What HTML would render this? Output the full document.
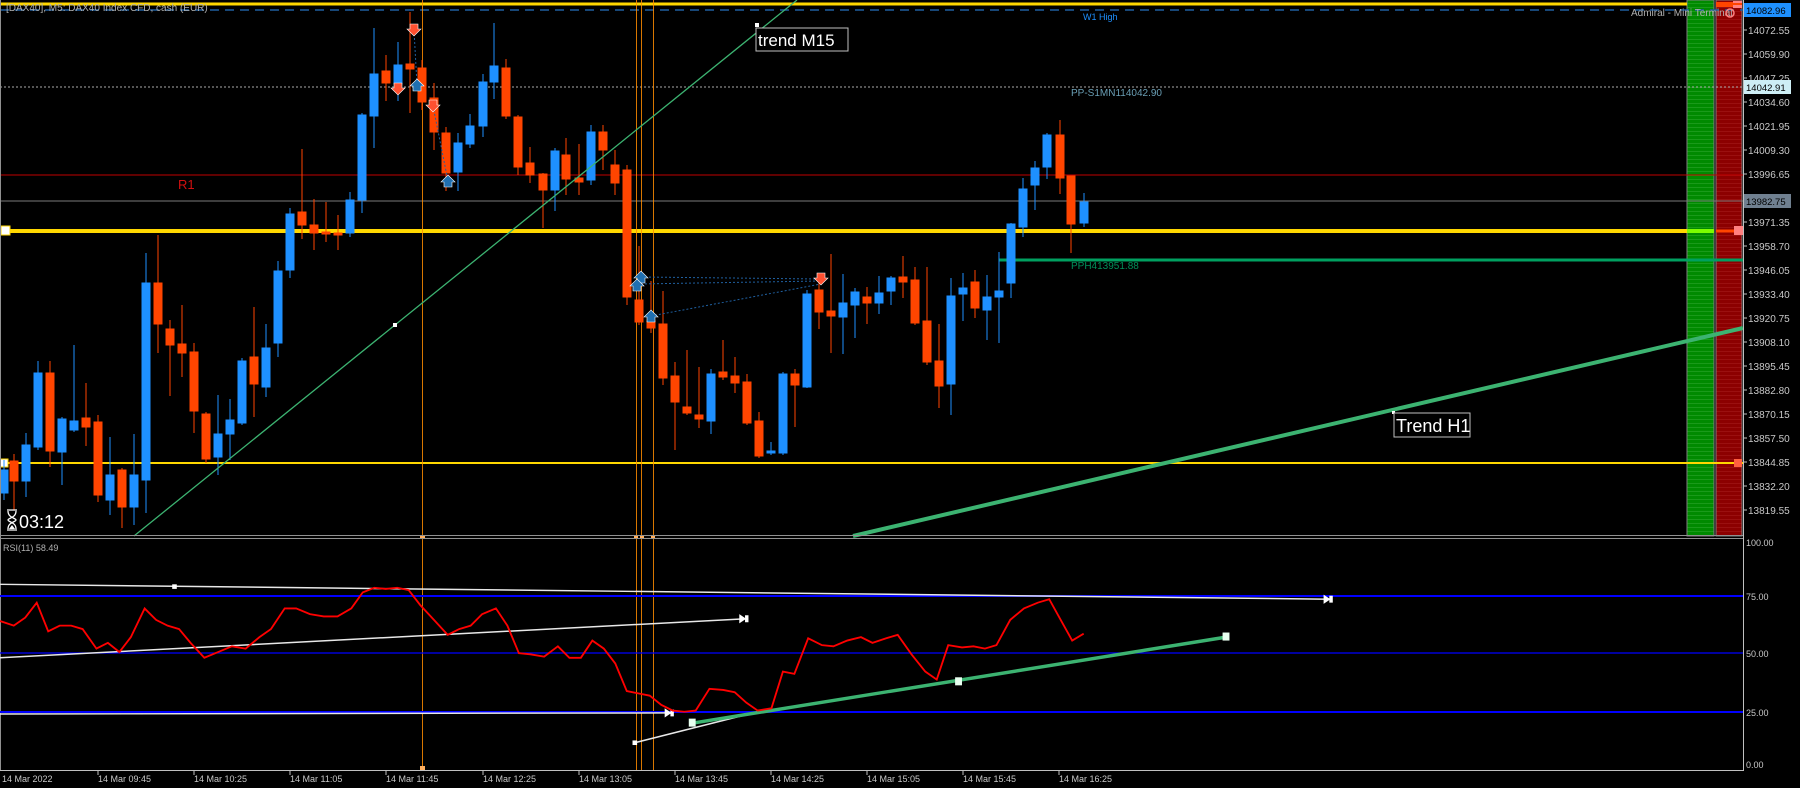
<!DOCTYPE html>
<html><head><meta charset="utf-8"><style>
html,body{margin:0;padding:0;background:#000;width:1800px;height:788px;overflow:hidden}
svg{display:block}
text{font-family:"Liberation Sans",sans-serif}
</style></head><body>
<svg width="1800" height="788" viewBox="0 0 1800 788" xmlns="http://www.w3.org/2000/svg">
<rect width="1800" height="788" fill="#000"/>
<defs>
<pattern id="stripeG" width="4" height="4" patternUnits="userSpaceOnUse"><rect width="4" height="4" fill="#008a00"/><rect y="3" width="4" height="1" fill="#1a9a1a"/></pattern>
<pattern id="stripeR" width="4" height="4" patternUnits="userSpaceOnUse"><rect width="4" height="4" fill="#8c0000"/><rect y="3" width="4" height="1" fill="#9a1010"/></pattern>
</defs>
<rect x="1687" y="0" width="27" height="536" fill="url(#stripeG)" stroke="#808080" stroke-width="1"/>
<rect x="1716" y="0" width="26" height="536" fill="url(#stripeR)" stroke="#808080" stroke-width="1"/>
<rect x="1716" y="2" width="26" height="5" fill="#ff4500"/>
<rect x="1733" y="1" width="9" height="7" fill="#ff8080"/>
<line x1="0" y1="4" x2="1687" y2="4" stroke="#ffd700" stroke-width="3"/>
<line x1="1716" y1="4" x2="1742" y2="4" stroke="#ff4500" stroke-width="2"/>
<line x1="0" y1="10" x2="1743" y2="10" stroke="#1f5f9f" stroke-width="1.5" stroke-dasharray="9,6"/>
<line x1="0" y1="87" x2="1743" y2="87" stroke="#aaa" stroke-width="1" stroke-dasharray="2,2"/>
<line x1="0" y1="175" x2="1743" y2="175" stroke="#c00000" stroke-width="1"/>
<line x1="0" y1="201" x2="1743" y2="201" stroke="#7a7a7a" stroke-width="1"/>
<line x1="0" y1="231" x2="1687" y2="231" stroke="#ffd700" stroke-width="4"/>
<line x1="1687" y1="231" x2="1714" y2="231" stroke="#7cfc00" stroke-width="4"/>
<line x1="1716" y1="231" x2="1742" y2="231" stroke="#ff4500" stroke-width="3"/>
<rect x="1734" y="226" width="9" height="9" fill="#ff8080"/>
<line x1="999" y1="260" x2="1743" y2="260" stroke="#00a060" stroke-width="3"/>
<line x1="0" y1="463" x2="1743" y2="463" stroke="#ffd700" stroke-width="2"/>
<rect x="1734" y="459" width="8" height="8" fill="#ff6040"/>
<rect x="1" y="226" width="9" height="9" fill="#fff" stroke="#ffd700"/>
<rect x="0" y="459" width="8" height="8" fill="#fff" stroke="#ffd700"/>
<g stroke="#ff8c00" stroke-width="1" opacity="0.85">
<line x1="422.5" y1="0" x2="422.5" y2="770"/>
<line x1="636.5" y1="0" x2="636.5" y2="770"/>
<line x1="641.5" y1="0" x2="641.5" y2="770"/>
<line x1="653.5" y1="0" x2="653.5" y2="770"/>
</g>
<rect x="420" y="535" width="5" height="4" fill="#ffb060"/>
<rect x="420" y="766" width="5" height="4" fill="#ffb060"/>
<rect x="634" y="535" width="4" height="4" fill="#ffb060"/>
<rect x="640" y="535" width="4" height="4" fill="#ffb060"/>
<rect x="651" y="535" width="4" height="4" fill="#ffb060"/>
<g stroke="#1e90ff" fill="#1e90ff" stroke-width="1">
<line x1="4" y1="460" x2="4" y2="500"/><rect x="0" y="470" width="8" height="23"/>
<line x1="26" y1="433" x2="26" y2="497"/><rect x="22" y="445" width="8" height="36"/>
<line x1="38" y1="361" x2="38" y2="450"/><rect x="34" y="373" width="8" height="74"/>
<line x1="62" y1="417" x2="62" y2="485"/><rect x="58" y="419" width="8" height="33"/>
<line x1="74" y1="345" x2="74" y2="432"/><rect x="70" y="421" width="8" height="9"/>
<line x1="110" y1="437" x2="110" y2="515"/><rect x="106" y="475" width="8" height="25"/>
<line x1="134" y1="434" x2="134" y2="525"/><rect x="130" y="475" width="8" height="32"/>
<line x1="146" y1="253" x2="146" y2="513"/><rect x="142" y="283" width="8" height="197"/>
<line x1="218" y1="395" x2="218" y2="475"/><rect x="214" y="434" width="8" height="23"/>
<line x1="230" y1="399" x2="230" y2="460"/><rect x="226" y="420" width="8" height="14"/>
<line x1="242" y1="358" x2="242" y2="425"/><rect x="238" y="361" width="8" height="62"/>
<line x1="266" y1="324" x2="266" y2="397"/><rect x="262" y="348" width="8" height="39"/>
<line x1="278" y1="261" x2="278" y2="357"/><rect x="274" y="271" width="8" height="72"/>
<line x1="290" y1="208" x2="290" y2="278"/><rect x="286" y="214" width="8" height="56"/>
<line x1="350" y1="192" x2="350" y2="237"/><rect x="346" y="200" width="8" height="33"/>
<line x1="362" y1="113" x2="362" y2="213"/><rect x="358" y="115" width="8" height="85"/>
<line x1="374" y1="28" x2="374" y2="148"/><rect x="370" y="74" width="8" height="42"/>
<line x1="398" y1="42" x2="398" y2="101"/><rect x="394" y="65" width="8" height="19"/>
<line x1="458" y1="133" x2="458" y2="191"/><rect x="454" y="143" width="8" height="29"/>
<line x1="470" y1="114" x2="470" y2="148"/><rect x="466" y="126" width="8" height="18"/>
<line x1="483" y1="74" x2="483" y2="137"/><rect x="479" y="82" width="8" height="44"/>
<line x1="494" y1="23" x2="494" y2="99"/><rect x="490" y="66" width="8" height="16"/>
<line x1="555" y1="148" x2="555" y2="211"/><rect x="551" y="151" width="8" height="39"/>
<line x1="591" y1="125" x2="591" y2="185"/><rect x="587" y="132" width="8" height="48"/>
<line x1="711" y1="369" x2="711" y2="434"/><rect x="707" y="374" width="8" height="47"/>
<line x1="771" y1="442" x2="771" y2="455"/><rect x="767" y="451" width="8" height="2"/>
<line x1="783" y1="372" x2="783" y2="455"/><rect x="779" y="374" width="8" height="79"/>
<line x1="807" y1="290" x2="807" y2="388"/><rect x="803" y="294" width="8" height="93"/>
<line x1="843" y1="274" x2="843" y2="354"/><rect x="839" y="303" width="8" height="14"/>
<line x1="855" y1="288" x2="855" y2="338"/><rect x="851" y="292" width="8" height="13"/>
<line x1="879" y1="276" x2="879" y2="314"/><rect x="875" y="293" width="8" height="10"/>
<line x1="891" y1="276" x2="891" y2="305"/><rect x="887" y="278" width="8" height="13"/>
<line x1="951" y1="278" x2="951" y2="415"/><rect x="947" y="296" width="8" height="88"/>
<line x1="963" y1="273" x2="963" y2="321"/><rect x="959" y="288" width="8" height="6"/>
<line x1="987" y1="275" x2="987" y2="340"/><rect x="983" y="297" width="8" height="13"/>
<line x1="999" y1="252" x2="999" y2="343"/><rect x="995" y="291" width="8" height="6"/>
<line x1="1011" y1="223" x2="1011" y2="298"/><rect x="1007" y="224" width="8" height="59"/>
<line x1="1023" y1="178" x2="1023" y2="237"/><rect x="1019" y="189" width="8" height="38"/>
<line x1="1035" y1="161" x2="1035" y2="210"/><rect x="1031" y="168" width="8" height="17"/>
<line x1="1047" y1="133" x2="1047" y2="179"/><rect x="1043" y="135" width="8" height="32"/>
<line x1="1084" y1="193" x2="1084" y2="227"/><rect x="1080" y="202" width="8" height="21"/>
</g>
<g stroke="#ff4500" fill="#ff4500" stroke-width="1">
<line x1="14" y1="454" x2="14" y2="510"/><rect x="10" y="461" width="8" height="20"/>
<line x1="50" y1="361" x2="50" y2="467"/><rect x="46" y="373" width="8" height="78"/>
<line x1="86" y1="383" x2="86" y2="446"/><rect x="82" y="418" width="8" height="9"/>
<line x1="98" y1="415" x2="98" y2="502"/><rect x="94" y="422" width="8" height="73"/>
<line x1="122" y1="468" x2="122" y2="528"/><rect x="118" y="470" width="8" height="37"/>
<line x1="158" y1="235" x2="158" y2="353"/><rect x="154" y="283" width="8" height="41"/>
<line x1="170" y1="320" x2="170" y2="396"/><rect x="166" y="329" width="8" height="16"/>
<line x1="182" y1="305" x2="182" y2="377"/><rect x="178" y="344" width="8" height="9"/>
<line x1="194" y1="343" x2="194" y2="433"/><rect x="190" y="352" width="8" height="59"/>
<line x1="206" y1="412" x2="206" y2="463"/><rect x="202" y="414" width="8" height="45"/>
<line x1="254" y1="307" x2="254" y2="417"/><rect x="250" y="357" width="8" height="27"/>
<line x1="302" y1="149" x2="302" y2="239"/><rect x="298" y="212" width="8" height="13"/>
<line x1="314" y1="199" x2="314" y2="250"/><rect x="310" y="225" width="8" height="8"/>
<line x1="326" y1="202" x2="326" y2="242"/><rect x="322" y="232" width="8" height="2"/>
<line x1="338" y1="215" x2="338" y2="250"/><rect x="334" y="233" width="8" height="2"/>
<line x1="386" y1="55" x2="386" y2="101"/><rect x="382" y="71" width="8" height="12"/>
<line x1="410" y1="12" x2="410" y2="113"/><rect x="406" y="64" width="8" height="5"/>
<line x1="422" y1="60" x2="422" y2="110"/><rect x="418" y="68" width="8" height="34"/>
<line x1="434" y1="83" x2="434" y2="150"/><rect x="430" y="98" width="8" height="34"/>
<line x1="446" y1="127" x2="446" y2="191"/><rect x="442" y="133" width="8" height="40"/>
<line x1="506" y1="59" x2="506" y2="119"/><rect x="502" y="68" width="8" height="48"/>
<line x1="518" y1="115" x2="518" y2="175"/><rect x="514" y="117" width="8" height="50"/>
<line x1="530" y1="147" x2="530" y2="183"/><rect x="526" y="163" width="8" height="12"/>
<line x1="543" y1="173" x2="543" y2="228"/><rect x="539" y="174" width="8" height="16"/>
<line x1="566" y1="138" x2="566" y2="195"/><rect x="562" y="155" width="8" height="24"/>
<line x1="579" y1="144" x2="579" y2="195"/><rect x="575" y="178" width="8" height="4"/>
<line x1="603" y1="125" x2="603" y2="170"/><rect x="599" y="132" width="8" height="18"/>
<line x1="615" y1="150" x2="615" y2="195"/><rect x="611" y="165" width="8" height="18"/>
<line x1="627" y1="165" x2="627" y2="305"/><rect x="623" y="170" width="8" height="127"/>
<line x1="639" y1="246" x2="639" y2="325"/><rect x="635" y="300" width="8" height="22"/>
<line x1="651" y1="281" x2="651" y2="333"/><rect x="647" y="321" width="8" height="7"/>
<line x1="663" y1="291" x2="663" y2="385"/><rect x="659" y="324" width="8" height="54"/>
<line x1="675" y1="362" x2="675" y2="450"/><rect x="671" y="376" width="8" height="26"/>
<line x1="687" y1="350" x2="687" y2="415"/><rect x="683" y="407" width="8" height="6"/>
<line x1="699" y1="367" x2="699" y2="428"/><rect x="695" y="415" width="8" height="4"/>
<line x1="723" y1="340" x2="723" y2="380"/><rect x="719" y="372" width="8" height="5"/>
<line x1="735" y1="357" x2="735" y2="393"/><rect x="731" y="376" width="8" height="7"/>
<line x1="747" y1="374" x2="747" y2="425"/><rect x="743" y="382" width="8" height="41"/>
<line x1="759" y1="412" x2="759" y2="458"/><rect x="755" y="421" width="8" height="35"/>
<line x1="795" y1="369" x2="795" y2="427"/><rect x="791" y="374" width="8" height="11"/>
<line x1="819" y1="273" x2="819" y2="329"/><rect x="815" y="290" width="8" height="22"/>
<line x1="831" y1="254" x2="831" y2="353"/><rect x="827" y="311" width="8" height="5"/>
<line x1="867" y1="287" x2="867" y2="324"/><rect x="863" y="297" width="8" height="6"/>
<line x1="903" y1="256" x2="903" y2="298"/><rect x="899" y="277" width="8" height="5"/>
<line x1="915" y1="267" x2="915" y2="325"/><rect x="911" y="280" width="8" height="43"/>
<line x1="927" y1="267" x2="927" y2="365"/><rect x="923" y="321" width="8" height="41"/>
<line x1="939" y1="324" x2="939" y2="408"/><rect x="935" y="361" width="8" height="25"/>
<line x1="975" y1="270" x2="975" y2="318"/><rect x="971" y="282" width="8" height="26"/>
<line x1="1060" y1="120" x2="1060" y2="194"/><rect x="1056" y="135" width="8" height="43"/>
<line x1="1071" y1="176" x2="1071" y2="253"/><rect x="1067" y="176" width="8" height="48"/>
</g>
<g stroke="#1f5f9f" stroke-width="1" stroke-dasharray="2,2" fill="none">
<line x1="414" y1="30" x2="417" y2="85"/>
<line x1="433" y1="106" x2="448" y2="181"/>
<line x1="641" y1="277" x2="821" y2="279"/>
<line x1="637" y1="284" x2="821" y2="281"/>
<line x1="651" y1="316" x2="821" y2="284"/>
</g>
<g fill="#ff5030" stroke="#fff" stroke-width="0.6">
<path d="M410,24h8v5h3l-7,7-7-7h3z"/>
<path d="M394,83h8v5h3l-7,7-7-7h3z"/>
<path d="M429,100h8v5h3l-7,7-7-7h3z"/>
<path d="M817,273h8v5h3l-7,7-7-7h3z"/>
</g>
<g fill="#1f6fb0" stroke="#fff" stroke-width="0.6">
<path d="M417,79l7,7h-3v5h-8v-5h-3z"/>
<path d="M448,175l7,7h-3v5h-8v-5h-3z"/>
<path d="M641,271l7,7h-3v5h-8v-5h-3z"/>
<path d="M637,279l7,7h-3v5h-8v-5h-3z"/>
<path d="M651,310l7,7h-3v5h-8v-5h-3z"/>
</g>
<line x1="134" y1="536" x2="797" y2="0" stroke="#3cb371" stroke-width="1.3"/>
<rect x="393" y="323" width="4" height="4" fill="#fff"/>
<rect x="755" y="23" width="4" height="4" fill="#fff"/>
<rect x="756" y="28" width="92" height="23" fill="#000" stroke="#c0c0c0"/>
<text x="758" y="46" font-size="17" fill="#fff">trend M15</text>
<line x1="853" y1="536" x2="1743" y2="328" stroke="#3cb371" stroke-width="4"/>
<rect x="1392" y="411" width="3" height="3" fill="#fff"/>
<rect x="1394" y="413" width="76" height="24" fill="#000" stroke="#c0c0c0"/>
<text x="1396" y="432" font-size="18" fill="#fff">Trend H1</text>
<text x="6" y="11" font-size="10" fill="#b0b0b0">[DAX40], M5:  DAX40 Index CFD, cash (EUR)</text>
<text x="1083" y="20" font-size="9" fill="#1e90ff">W1 High</text>
<text x="1071" y="96" font-size="10" fill="#6a9fb5">PP-S1MN114042.90</text>
<text x="1071" y="269" font-size="10" fill="#00905a">PPH413951.88</text>
<text x="178" y="189" font-size="13" fill="#d01010">R1</text>
<text x="1631" y="16" font-size="10" fill="#b0b0b0">Admiral - Mini Terminal</text>
<circle cx="1730" cy="13" r="4" fill="none" stroke="#ff8080" stroke-width="1.5"/>
<g fill="none" stroke="#fff" stroke-width="1.3">
<path d="M7,510h10M7,530h10M8,511c0,7 8,7 8,9c0,2 -8,2 -8,9M16,511c0,7 -8,7 -8,9c0,2 8,2 8,9"/>
</g>
<path d="M9,529l3,-4 3,4z" fill="#fff"/>
<text x="19" y="528" font-size="18" fill="#fff">03:12</text>
<line x1="0" y1="535.5" x2="1743" y2="535.5" stroke="#909090" stroke-width="1"/>
<line x1="0" y1="538.5" x2="1743" y2="538.5" stroke="#909090" stroke-width="1"/>
<line x1="1743.5" y1="0" x2="1743.5" y2="770" stroke="#c0c0c0" stroke-width="1"/>
<line x1="0" y1="770.5" x2="1744" y2="770.5" stroke="#c0c0c0" stroke-width="1"/>
<line x1="0.5" y1="0" x2="0.5" y2="770" stroke="#909090" stroke-width="1"/>
<g font-size="10" fill="#c8c8c8">
<text x="1748" y="34">14072.55</text><text x="1748" y="58">14059.90</text><text x="1748" y="82">14047.25</text>
<text x="1748" y="106">14034.60</text><text x="1748" y="130">14021.95</text><text x="1748" y="154">14009.30</text>
<text x="1748" y="178">13996.65</text><text x="1748" y="226">13971.35</text><text x="1748" y="250">13958.70</text>
<text x="1748" y="274">13946.05</text><text x="1748" y="298">13933.40</text><text x="1748" y="322">13920.75</text>
<text x="1748" y="346">13908.10</text><text x="1748" y="370">13895.45</text><text x="1748" y="394">13882.80</text>
<text x="1748" y="418">13870.15</text><text x="1748" y="442">13857.50</text><text x="1748" y="466">13844.85</text>
<text x="1748" y="490">13832.20</text><text x="1748" y="514">13819.55</text>
</g>
<g stroke="#c0c0c0" stroke-width="1">
<line x1="1743" y1="30" x2="1747" y2="30"/><line x1="1743" y1="54" x2="1747" y2="54"/><line x1="1743" y1="78" x2="1747" y2="78"/>
<line x1="1743" y1="102" x2="1747" y2="102"/><line x1="1743" y1="126" x2="1747" y2="126"/><line x1="1743" y1="150" x2="1747" y2="150"/>
<line x1="1743" y1="174" x2="1747" y2="174"/><line x1="1743" y1="222" x2="1747" y2="222"/><line x1="1743" y1="246" x2="1747" y2="246"/>
<line x1="1743" y1="270" x2="1747" y2="270"/><line x1="1743" y1="294" x2="1747" y2="294"/><line x1="1743" y1="318" x2="1747" y2="318"/>
<line x1="1743" y1="342" x2="1747" y2="342"/><line x1="1743" y1="366" x2="1747" y2="366"/><line x1="1743" y1="390" x2="1747" y2="390"/>
<line x1="1743" y1="414" x2="1747" y2="414"/><line x1="1743" y1="438" x2="1747" y2="438"/><line x1="1743" y1="462" x2="1747" y2="462"/>
<line x1="1743" y1="486" x2="1747" y2="486"/><line x1="1743" y1="510" x2="1747" y2="510"/>
</g>
<rect x="1744" y="3" width="47" height="14" fill="#1e90ff"/>
<text x="1746" y="14" font-size="9.5" fill="#000">14082.96</text>
<rect x="1744" y="80" width="47" height="14" fill="#cdeef5"/>
<text x="1746" y="91" font-size="9.5" fill="#000">14042.91</text>
<rect x="1744" y="194" width="47" height="14" fill="#708090"/>
<text x="1746" y="205" font-size="9.5" fill="#000">13982.75</text>
<text x="3" y="551" font-size="9" fill="#b0b0b0">RSI(11) 58.49</text>
<line x1="0" y1="596" x2="1743" y2="596" stroke="#0000ff" stroke-width="2"/>
<line x1="0" y1="653" x2="1743" y2="653" stroke="#0000ff" stroke-width="1.3"/>
<line x1="0" y1="712" x2="1743" y2="712" stroke="#0000ff" stroke-width="2"/>
<g font-size="9" fill="#c8c8c8">
<text x="1746" y="546">100.00</text><text x="1746" y="600">75.00</text><text x="1746" y="657">50.00</text>
<text x="1746" y="716">25.00</text><text x="1746" y="768">0.00</text>
</g>
<g transform="scale(1.14796)">
<g stroke="#e8e8e8" stroke-width="1.3" fill="none">
<polyline points="0,509 1160,522"/>
<polyline points="0,573 650,539"/>
<polyline points="0,622 585,621"/>
<polyline points="553,647 660,620"/>
</g>
<rect x="150" y="509" width="4" height="4" fill="#fff"/>
<path d="M1153,518l6,4-6,4z M1158,519h3v6h-3z" fill="#fff"/>
<path d="M644,535l6,4-6,4z M649,536h3v6h-3z" fill="#fff"/>
<path d="M579,617l6,4-6,4z M584,618h3v6h-3z" fill="#fff"/>
<rect x="551" y="645" width="4" height="4" fill="#fff"/>
<line x1="603" y1="630" x2="1068" y2="555" stroke="#3cb371" stroke-width="3"/>
<rect x="600" y="626" width="6" height="7" fill="#e8fff0"/>
<rect x="832" y="590" width="6" height="7" fill="#e8fff0"/>
<rect x="1065" y="551" width="6" height="7" fill="#e8fff0"/>
<polyline fill="none" stroke="#ff0000" stroke-width="1.6" points="0,541 12,545 22,538 32,525 42,550 52,545 62,545 72,548 84,565 94,560 104,568 114,555 126,530 136,540 146,545 156,548 166,560 178,573 190,568 202,563 214,565 226,555 236,548 248,530 258,530 270,535 282,537 294,537 306,530 316,516 326,512 336,513 346,512 356,514 366,527 378,540 390,553 400,548 410,545 420,535 432,530 442,545 452,569 462,570 474,572 486,563 496,573 506,573 516,558 526,565 536,578 546,602 556,604 566,606 576,614 586,619 596,620 606,619 618,600 630,601 640,603 650,612 660,619 672,617 682,585 692,587 704,556 716,562 726,563 738,558 750,555 760,560 772,556 782,553 794,570 806,585 816,592 826,562 838,564 848,563 858,565 868,562 880,540 892,530 904,525 914,522 924,540 934,558 944,552"/>
</g>
<g stroke="#c0c0c0" stroke-width="1">
<line x1="98" y1="770" x2="98" y2="775"/><line x1="194" y1="770" x2="194" y2="775"/><line x1="290" y1="770" x2="290" y2="775"/>
<line x1="386" y1="770" x2="386" y2="775"/><line x1="483" y1="770" x2="483" y2="775"/><line x1="579" y1="770" x2="579" y2="775"/>
<line x1="675" y1="770" x2="675" y2="775"/><line x1="771" y1="770" x2="771" y2="775"/><line x1="867" y1="770" x2="867" y2="775"/>
<line x1="963" y1="770" x2="963" y2="775"/><line x1="1059" y1="770" x2="1059" y2="775"/>
</g>
<g font-size="9" fill="#c8c8c8">
<text x="2" y="782">14 Mar 2022</text><text x="98" y="782">14 Mar 09:45</text><text x="194" y="782">14 Mar 10:25</text>
<text x="290" y="782">14 Mar 11:05</text><text x="386" y="782">14 Mar 11:45</text><text x="483" y="782">14 Mar 12:25</text>
<text x="579" y="782">14 Mar 13:05</text><text x="675" y="782">14 Mar 13:45</text><text x="771" y="782">14 Mar 14:25</text>
<text x="867" y="782">14 Mar 15:05</text><text x="963" y="782">14 Mar 15:45</text><text x="1059" y="782">14 Mar 16:25</text>
</g>
</svg>
</body></html>
